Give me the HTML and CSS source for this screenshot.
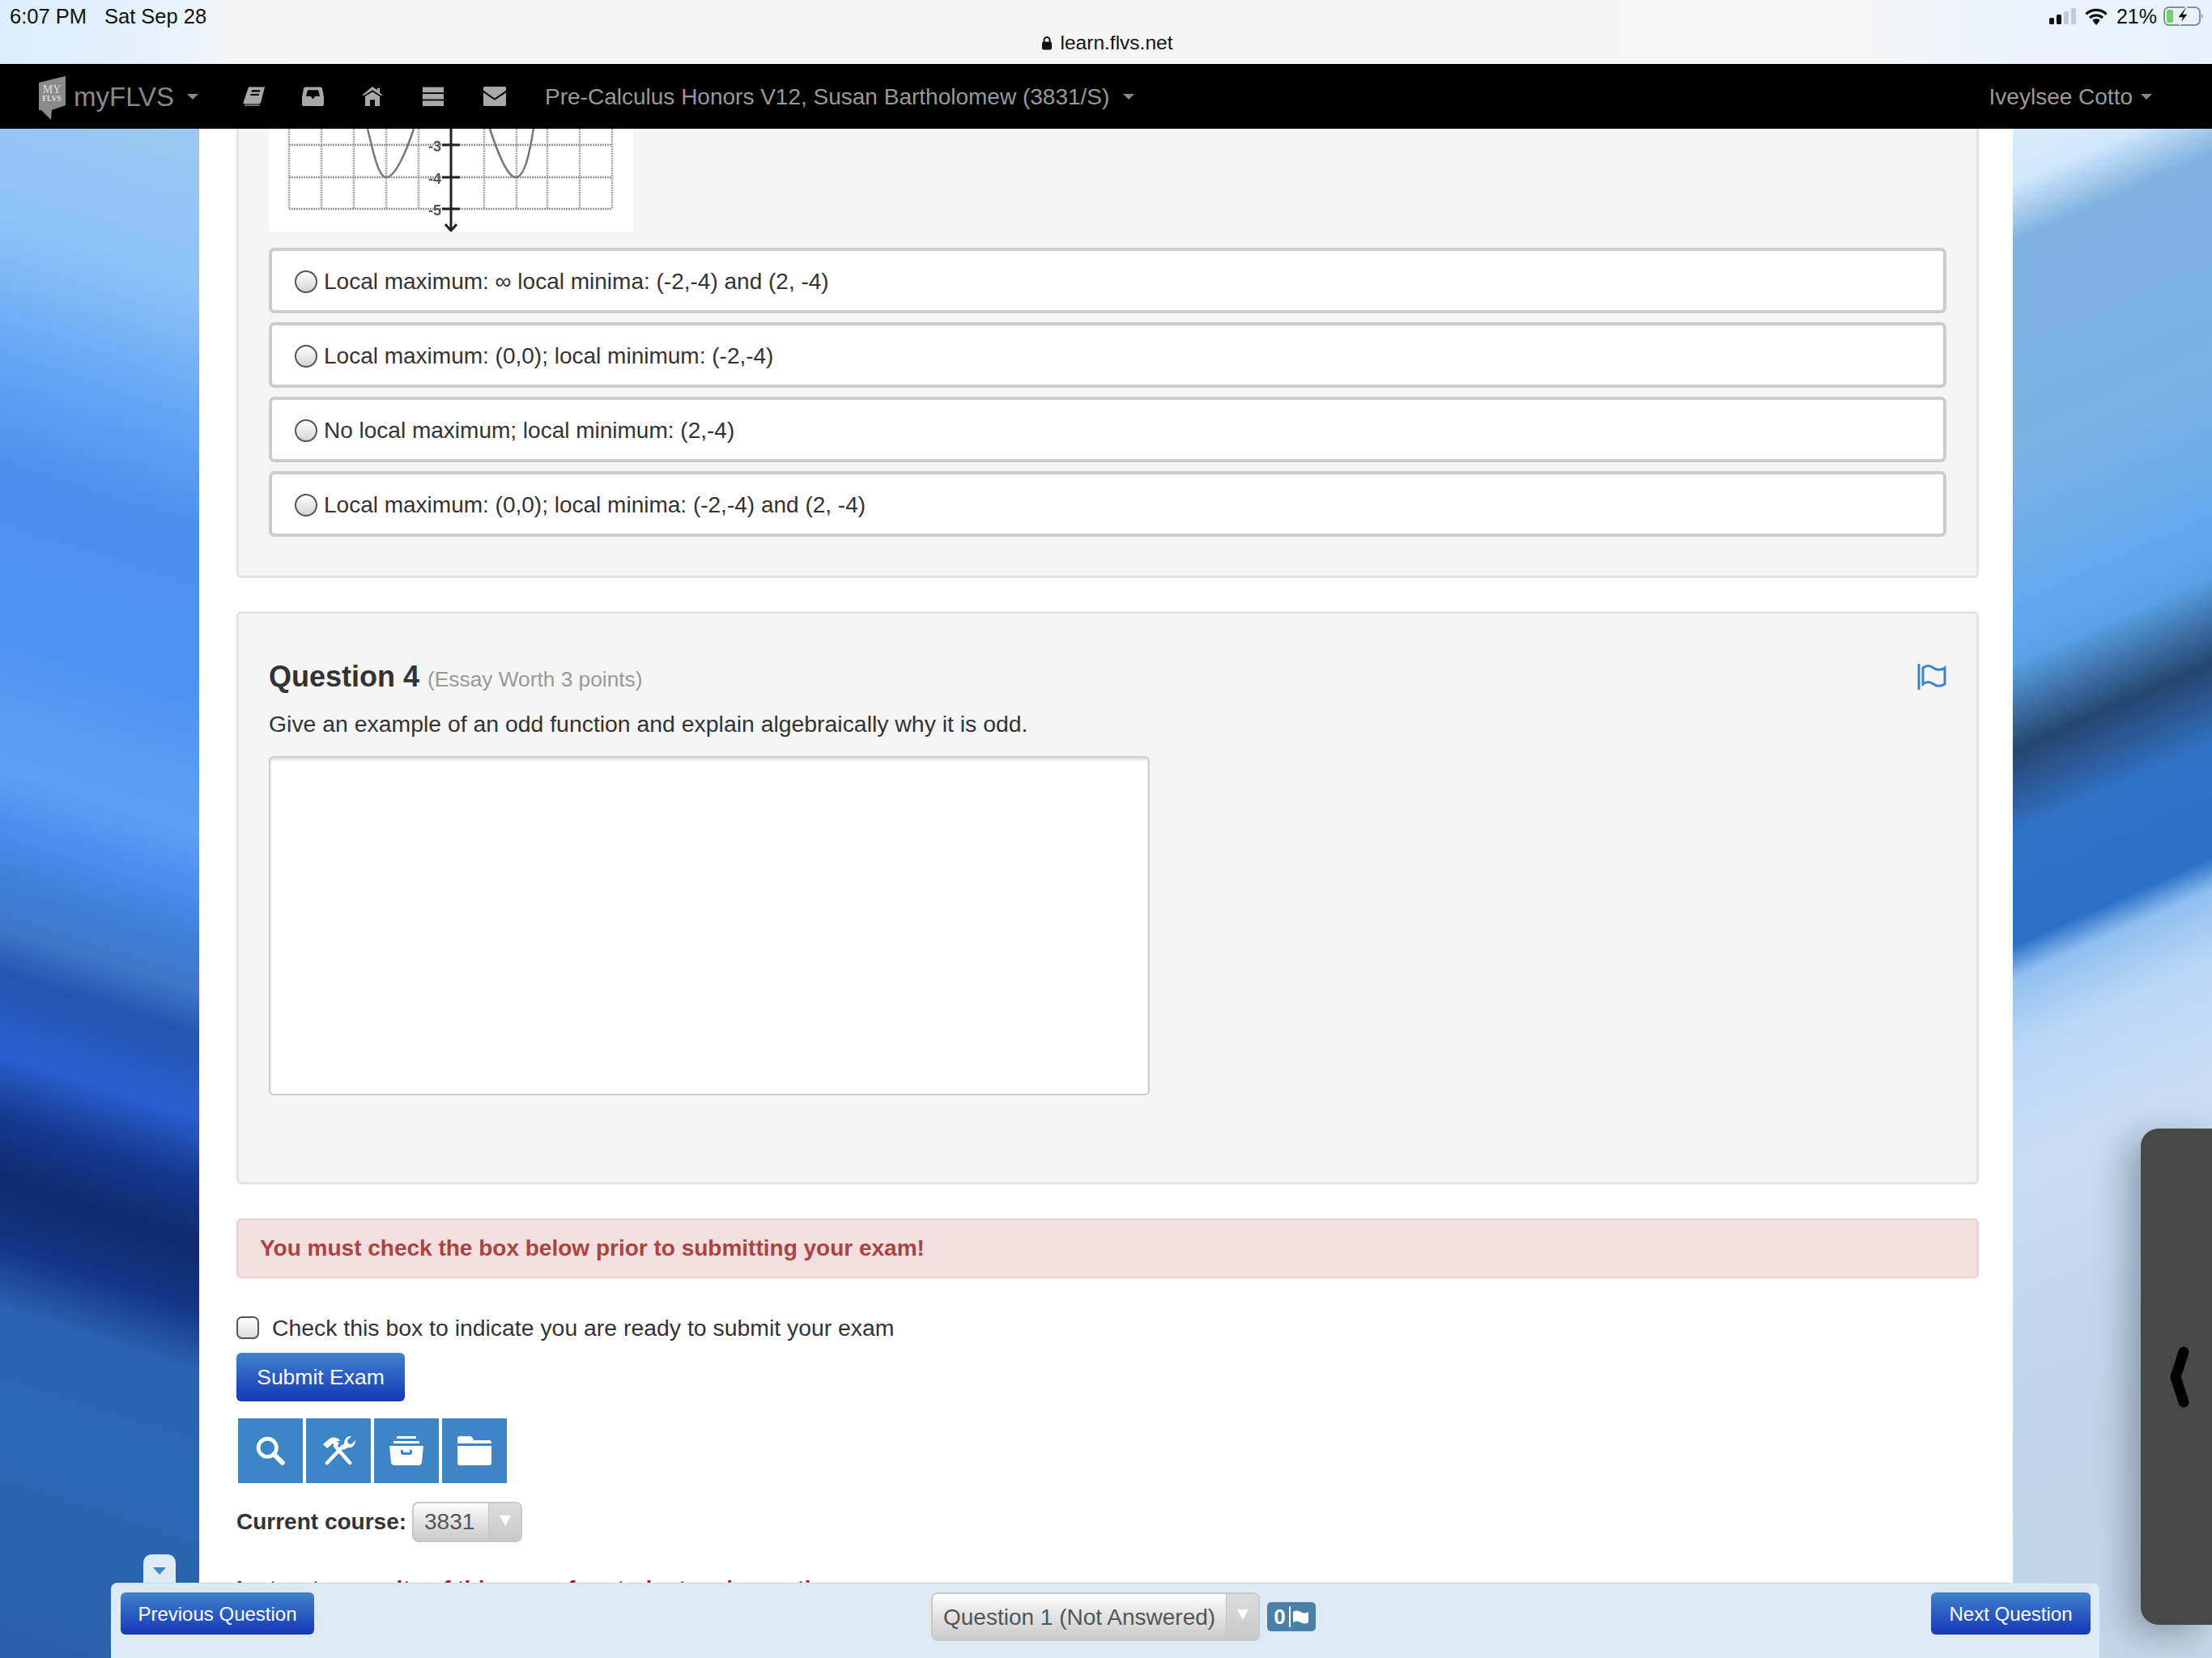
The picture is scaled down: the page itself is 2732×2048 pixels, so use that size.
FILE: index.html
```html
<!DOCTYPE html>
<html lang="en">
<head>
<meta charset="utf-8">
<title>myFLVS Exam</title>
<link rel="stylesheet" href="styles.css">
</head>
<body>
<div class="page">
  <header class="statusbar">
    <div class="status-left"><span>6:07 PM</span><span>Sat Sep 28</span></div>
    <div class="status-url">
      <svg class="lock" viewBox="0 0 14 18"><path d="M3.500 8V5.500a3.500 3.500 0 0 1 7 0V8" fill="none" stroke="#111" stroke-width="2"/><rect x="1" y="7.500" width="12" height="10" rx="2" fill="#111"/></svg>
      <span>learn.flvs.net</span>
    </div>
    <div class="status-right">
      <svg class="signal" viewBox="0 0 33 20"><rect x="0" y="12" width="6" height="8" rx="1.500" fill="#111"/><rect x="9" y="8" width="6" height="12" rx="1.500" fill="#111"/><rect x="18" y="4" width="6" height="16" rx="1.500" fill="#c4c8d0"/><rect x="27" y="0" width="6" height="20" rx="1.500" fill="#c4c8d0"/></svg>
      <svg class="wifi" viewBox="0 0 28 21"><path d="M1.500 7.500a18 18 0 0 1 25 0M6 12a12 12 0 0 1 16 0M10.200 16a6 6 0 0 1 7.600 0" fill="none" stroke="#111" stroke-width="3.200"/><path d="M14 21l-3.500-4a5 5 0 0 1 7 0z" fill="#111"/></svg>
      <span>21%</span>
      <svg class="battery" viewBox="0 0 50 24"><rect x="1" y="1" width="44" height="22" rx="6" fill="none" stroke="#8b8f94" stroke-width="2"/><rect x="4" y="4" width="8" height="16" rx="2.500" fill="#6fd36b"/><path d="M47 9c2 1 2 5 0 6z" fill="#8b8f94"/><path d="M27 1l-10 13h6l-3 9 11-14h-6l4-8z" fill="#111" stroke="#f3f5f9" stroke-width="1.500"/></svg>
    </div>
  </header>

  <nav class="navbar">
    <svg class="logo" viewBox="0 0 34 54">
      <path d="M0 8L33 0v36L16 42l-1 12L3 42H0z" fill="#8b8b8b"/>
      <text x="16" y="21" class="logo-my">MY</text>
      <text x="16" y="31" class="logo-flvs">FLVS</text>
    </svg>
    <span class="brand">myFLVS</span>
    <span class="caret brand-caret"></span>
    <svg class="nav-icon book" viewBox="0 0 28 40" preserveAspectRatio="none"><path d="M7 1h20l-5 32c-.4 2-1.500 3-3.500 3H3.500C1.500 36 0 34.500.5 32.500zM11 7l-.7 4h10.500l.7-4zM9.800 15l-.6 3.500h10.500l.6-3.500z" fill="#a8a8a8" fill-rule="evenodd"/><path d="M2 38.500h19" stroke="#a8a8a8" stroke-width="2"/></svg>
    <svg class="nav-icon inbox" viewBox="0 0 27 40" preserveAspectRatio="none"><path d="M5 1h17c1.500 0 2.500 1 3 2.500L27 22v15c0 1.500-1 3-3 3H3c-2 0-3-1.500-3-3V22L2 3.500C2.500 2 3.500 1 5 1zm2 6L5 20h6l2 5h1l2-5h6L20 7z" fill="#a8a8a8" fill-rule="evenodd"/></svg>
    <svg class="nav-icon home" viewBox="0 0 26 40" preserveAspectRatio="none"><path d="M13 0l6 7V3h3v9l4 6h-3L13 7 3 18H0z" fill="#a8a8a8"/><path d="M13 11l9 9v20h-6V27h-6v13H4V20z" fill="#a8a8a8"/></svg>
    <svg class="nav-icon bars" viewBox="0 0 26 40" preserveAspectRatio="none"><rect y="1" width="26" height="11" fill="#a8a8a8"/><rect y="15" width="26" height="11" fill="#a8a8a8"/><rect y="29" width="26" height="11" fill="#a8a8a8"/></svg>
    <svg class="nav-icon envelope" viewBox="0 0 28 40" preserveAspectRatio="none"><path d="M2 0h24a2 2 0 0 1 2 2v6L14 24 0 8V2a2 2 0 0 1 2-2zM0 12l14 16 14-16v26a2 2 0 0 1-2 2H2a2 2 0 0 1-2-2z" fill="#a8a8a8"/></svg>
    <span class="course-title">Pre-Calculus Honors V12, Susan Bartholomew (3831/S)</span>
    <span class="caret title-caret"></span>
    <span class="user-name">Iveylsee Cotto</span>
    <span class="caret user-caret"></span>
  </nav>

  <div class="viewport">
    <aside class="wall wall-left"></aside>
    <main class="content">
      <section class="panel panel-first">
        <svg class="graph" viewBox="0 0 450 127">
          <g class="graph-soft">
            <path class="grid-v" d="M25 0V99M65 0V99M105 0V99M145 0V99M185 0V99M266 0V99M306 0V99M344 0V99M384 0V99M424 0V99"/>
            <path class="grid-h" d="M25 20H424M25 60H424M25 99H424"/>
            <path class="curve" d="M122 0C130 34 136 60 145 60C156 60 170 28 179 0M273 0C284 34 296 60 305 60C316 60 322 30 327 0"/>
            <path class="axis" d="M225 0V124M214 20H236M214 60H236M214 99H236M218 118L225 126L232 118"/>
            <text x="197" y="28" class="tick">-3</text>
            <text x="197" y="68" class="tick">-4</text>
            <text x="197" y="107" class="tick">-5</text>
          </g>
        </svg>
        <div class="options">
          <label class="option"><input type="radio" name="q3" class="radio"><span>Local maximum: ∞ local minima: (-2,-4) and (2, -4)</span></label>
          <label class="option"><input type="radio" name="q3" class="radio"><span>Local maximum: (0,0); local minimum: (-2,-4)</span></label>
          <label class="option"><input type="radio" name="q3" class="radio"><span>No local maximum; local minimum: (2,-4)</span></label>
          <label class="option"><input type="radio" name="q3" class="radio"><span>Local maximum: (0,0); local minima: (-2,-4) and (2, -4)</span></label>
        </div>
      </section>

      <section class="panel panel-essay">
        <div class="question-head">
          <h2 class="question-title">Question 4 <small>(Essay Worth 3 points)</small></h2>
          <svg class="flag" viewBox="0 0 36 32"><path d="M2 1v30" stroke="#3d85c6" stroke-width="3" stroke-linecap="round" fill="none"/><path d="M7 5c4-3 9-3 13 0s9 3 14 0v20c-5 3-10 3-14 0s-9-3-13 0z" fill="none" stroke="#3d85c6" stroke-width="3"/></svg>
        </div>
        <p class="question-text">Give an example of an odd function and explain algebraically why it is odd.</p>
        <textarea class="answer" aria-label="Answer"></textarea>
      </section>

      <div class="alert">You must check the box below prior to submitting your exam!</div>

      <label class="confirm"><input type="checkbox" class="check"><span>Check this box to indicate you are ready to submit your exam</span></label>
      <button class="btn btn-submit" type="button">Submit Exam</button>

      <div class="tools">
        <span class="tool"><svg viewBox="0 0 34 34"><circle cx="13.500" cy="13.500" r="10.500" fill="none" stroke="#fff" stroke-width="4.500"/><path d="M21 21l10 10" stroke="#fff" stroke-width="5.500" stroke-linecap="round"/></svg></span>
        <span class="tool"><svg viewBox="0 0 42 36"><path d="M2 10L10 3Q15 0 21 3L23 6H19L22 9L18.500 13L14 9L7 15z" fill="#fff"/><path d="M17 12L35 33" stroke="#fff" stroke-width="4.500" stroke-linecap="round"/><path d="M7 33L26 13" stroke="#fff" stroke-width="4.500" stroke-linecap="round"/><path d="M37 0l-5 5 1 4 4 1 5-5c0 6-4 10-9 9l-6 3-1-4 2-4c0-5 4-10 9-9z" fill="#fff"/></svg></span>
        <span class="tool"><svg viewBox="0 0 42 36"><rect x="9" y="0" width="24" height="3" fill="#fff"/><rect x="5" y="6" width="32" height="3" fill="#fff"/><path d="M0 12h42l-2 20c0 2-2 4-4 4H6c-2 0-4-2-4-4zM14 17v3c0 2 1 3 3 3h8c2 0 3-1 3-3v-3h-3v3h-8v-3z" fill="#fff" fill-rule="evenodd"/></svg></span>
        <span class="tool"><svg viewBox="0 0 42 36"><path d="M0 3c0-2 1-3 3-3h12c2 0 3 1 4 3l1 2h19c2 0 3 1 3 3v1H0zM0 12h42v21c0 2-1 3-3 3H3c-2 0-3-1-3-3z" fill="#fff"/></svg></span>
      </div>

      <div class="course-row">
        <strong>Current course:</strong>
        <div class="select select-course"><span class="select-value">3831</span><span class="select-arrow"><i></i></span></div>
      </div>

      <p class="clipped">Instructor results of this exam for student review notice</p>
    </main>
    <aside class="wall wall-right"></aside>

    <div class="handle">
      <svg viewBox="0 0 30 80"><path d="M21 9L11 40l10 31" fill="none" stroke="#000" stroke-width="13" stroke-linecap="round" stroke-linejoin="round"/></svg>
    </div>

    <div class="tab"><i></i></div>
    <footer class="qbar">
      <button class="btn btn-prev" type="button">Previous Question</button>
      <div class="qbar-center">
        <div class="select select-question"><span class="select-value">Question 1 (Not Answered)</span><span class="select-arrow"><i></i></span></div>
        <span class="badge">0<svg viewBox="0 0 26 26"><path d="M2 1v24" stroke="#fff" stroke-width="2" stroke-linecap="round"/><path d="M6 7c3-2 6-2 9.500 0s6.500 2 9.500 0v13c-3 2-6 2-9.500 0s-6.500-2-9.500 0z" fill="#fff"/></svg></span>
      </div>
      <button class="btn btn-next" type="button">Next Question</button>
    </footer>
  </div>
</div>
</body>
</html>
```
FILE: styles.css
```css
* { box-sizing: border-box; }
html, body { margin: 0; padding: 0; }
body { font-family: "Liberation Sans", Arial, sans-serif; color: #333; background: #fff; }
.page { width: 2732px; height: 2048px; display: flex; flex-direction: column; overflow: hidden; }

/* iOS status bar */
.statusbar { height: 79px; flex: none; display: grid; grid-template-columns: 1fr auto 1fr; align-items: start; padding: 0 10px 0 12px; color: #111; font-size: 25px;
  background: linear-gradient(90deg, #dbeefd 0, #e6f2fc 200px, #f5f5f6 280px, #f6f6f7 2300px, #ecf2fb 2500px, #e8f1fb 100%); }
.status-left { display: flex; gap: 22px; padding-top: 5px; line-height: 30px; font-size: 25.500px; }
.status-url { display: flex; align-items: center; gap: 10px; padding-top: 38px; line-height: 30px; font-size: 24.500px; }
.lock { width: 14px; height: 18px; }
.status-right { display: flex; align-items: center; justify-content: flex-end; padding-top: 5px; line-height: 30px; }
.signal { width: 33px; height: 20px; }
.wifi { width: 28px; height: 21px; margin-left: 11px; }
.status-right span { margin-left: 11px; }
.battery { width: 50px; height: 24px; margin-left: 8px; }

/* Navbar */
.navbar { height: 80px; flex: none; background: #000; display: flex; align-items: center; color: #999; font-size: 28px; padding-left: 48px; position: relative; z-index: 3; }
.logo { width: 34px; height: 54px; flex: none; margin-top: 3px; }
.logo-my { font-family: "Liberation Serif", serif; font-size: 14px; fill: #ddd; text-anchor: middle; }
.logo-flvs { font-family: "Liberation Serif", serif; font-size: 9.500px; font-weight: bold; fill: #ddd; text-anchor: middle; }
.brand { font-size: 33px; margin-left: 9px; color: #888; padding-top: 1px; }
.caret { width: 0; height: 0; border-left: 7.500px solid transparent; border-right: 7.500px solid transparent; border-top: 7.500px solid #888; flex: none; }
.brand-caret { margin-left: 16px; }
.nav-icon { height: 24px; flex: none; }
.book { width: 28px; margin-left: 55px; }
.inbox { width: 27px; margin-left: 45px; }
.home { width: 26px; margin-left: 47px; }
.bars { width: 26px; margin-left: 49px; }
.envelope { width: 28px; margin-left: 49px; }
.course-title { margin-left: 48px; padding-top: 1px; }
.title-caret { margin-left: 17px; }
.user-name { margin-left: auto; padding-top: 1px; }
.user-caret { margin-left: 10px; margin-right: 74px; }

/* Main area */
.viewport { flex: 1; display: flex; position: relative; min-height: 0; }
.wall { width: 246px; flex: none; }
.wall-left { background: linear-gradient(198deg, #9cc9f2 0, #8cc2f7 10%, #6aaaf5 17%, #4a90ef 25%, #4a92f3 35%, #5da0f5 44%, #4a8cf0 48%, #3f7fd8 51%, #3f78c8 54%, #2455b0 57%, #2a5fd0 62%, #15398f 66%, #0f2a6e 70%, #133585 74%, #2a62b0 78%, #2a68b4 85%, #2a5fa8 100%); }
.wall-right { background: linear-gradient(156deg, #d8ebfa 0, #d0e6fa 3.500%, #7fb3e0 7%, #7cb2e4 20%, #62a8ee 30%, #5aa2e8 33%, #24466e 38.500%, #2c5a98 41%, #2f72c4 43.500%, #2a6fc8 50.500%, #8fbff0 52.500%, #bcd8f6 57%, #c8dcf2 64%, #bfd3e8 83%, #c5d8ea 100%); }
.content { width: 2240px; flex: none; background: #fff; padding: 0 42px 0 46px; min-width: 0; }

.panel { background: #f5f5f5; border: 3px solid #e3e3e3; border-radius: 6px; padding: 0 37px; }
.panel-first { border-top: 0; border-top-left-radius: 0; border-top-right-radius: 0; height: 555px; }
.graph { display: block; width: 450px; height: 127px; background: #fff; }
.graph-soft { filter: blur(.5px); }
.grid-v { stroke: #aaa; stroke-width: 2.500; stroke-dasharray: 2 1; fill: none; }
.grid-h { stroke: #999; stroke-width: 2.500; stroke-dasharray: 2 1; fill: none; }
.curve { fill: none; stroke: #777; stroke-width: 2.500; }
.axis { fill: none; stroke: #222; stroke-width: 3; }
.tick { font-size: 18px; fill: #555; font-weight: bold; }
.options { margin-top: 20px; display: flex; flex-direction: column; gap: 11px; }
.option { height: 81px; background: #fff; border: 4px solid #ccc; border-radius: 7px; display: flex; align-items: center; padding: 2px 0 0 28px; font-size: 28px; color: #333; }
.radio { appearance: none; -webkit-appearance: none; width: 28px; height: 28px; margin: 0 8px 0 0; border-radius: 50%; border: 2px solid #555; background: linear-gradient(#fff, #d4d4d4); flex: none; }

.panel-essay { margin-top: 41px; height: 708px; padding-top: 54px; }
.question-head { display: flex; justify-content: space-between; align-items: flex-start; }
.question-title { margin: 0; font-size: 36px; line-height: 48px; font-weight: bold; color: #333; }
.question-title small { font-size: 26.300px; font-weight: normal; color: #999; }
.flag { width: 36px; height: 32px; margin-top: 8px; }
.question-text { margin: 11px 0 0; font-size: 28.400px; line-height: 40px; color: #333; }
.answer { display: block; width: 1088px; height: 419px; margin-top: 20px; border: 2px solid #ccc; border-radius: 6px; background: #fff; box-shadow: inset 0 3px 3px rgba(0,0,0,.12); resize: none; padding: 0; outline: 0; }

.alert { margin-top: 42px; height: 74px; background: #f2dede; border: 2px solid #ebccd1; border-radius: 6px; display: flex; align-items: center; padding-left: 27px; font-size: 28px; font-weight: bold; color: #a94442; }

.confirm { display: flex; align-items: center; margin-top: 45px; font-size: 28.400px; line-height: 32px; color: #333; }
.check { appearance: none; -webkit-appearance: none; width: 28px; height: 28px; margin: 0 16px 0 0; border: 2px solid #555; border-radius: 7px; background: linear-gradient(#fff, #dcdcdc); flex: none; }

.btn { border: 0; color: #fff; font-family: inherit; font-size: 24px; background: linear-gradient(#3f85cc, #3a78c8 15%, #1a3fbc 90%); border-radius: 6px; border-bottom: 1px solid #16348f; padding: 2px 0 0; display: block; }
.btn-submit { width: 208px; height: 60px; margin-top: 15px; font-size: 26.500px; }

.tools { display: flex; gap: 4px; margin-top: 21px; padding-left: 2px; }
.tool { width: 80px; height: 80px; background: #3d85c6; display: flex; align-items: center; justify-content: center; }
.tool svg { width: 42px; height: 36px; }

.course-row { display: flex; align-items: center; gap: 7px; margin-top: 23px; font-size: 28px; color: #333; }
.select { display: flex; align-items: stretch; background: linear-gradient(#fff, #f2f2f2 20%, #c9c9c9); border: 2px solid #c8c8c8; border-radius: 8px; color: #555; white-space: nowrap; }
.select-value { display: flex; align-items: center; flex: 1; }
.select-arrow { display: flex; justify-content: center; padding-top: 15px; border-left: 1px solid #c4c4c4; background: linear-gradient(#dcdcdc, #c9c9c9); border-radius: 0 7px 7px 0; }
.select-arrow i { width: 0; height: 0; border-left: 7px solid transparent; border-right: 7px solid transparent; border-top: 13px solid #fff; }
.select-course { width: 136px; height: 50px; font-size: 28px; }
.select-course .select-value { padding-left: 13px; }
.select-course .select-arrow { width: 40px; }
.select-question { width: 406px; height: 60px; font-size: 28px; }
.select-question .select-value { padding: 2px 0 0 13px; }
.select-question .select-arrow { width: 40px; padding-top: 19px; }
.clipped { margin: 42px 0 0; font-size: 28px; font-weight: bold; color: #a01f2b; line-height: 32px; white-space: nowrap; }

/* overlays */
.handle { position: absolute; left: 2644px; top: 1235px; width: 88px; height: 613px; background: #484848; border-radius: 22px 0 0 22px; box-shadow: -16px 12px 40px rgba(40,50,60,.35); }
.handle svg { position: absolute; left: 32px; top: 267px; width: 30px; height: 80px; }
.tab { position: absolute; left: 177px; top: 1761px; width: 40px; height: 40px; background: #dceaf6; border-radius: 10px 10px 0 0; display: flex; justify-content: center; padding-top: 16px; }
.tab i { width: 0; height: 0; border-left: 8.500px solid transparent; border-right: 8.500px solid transparent; border-top: 9px solid #3d85c6; }
.qbar { position: absolute; left: 137px; right: 139px; top: 1796px; height: 93px; background: #dceaf6; border-top: 1px solid #c6e0e6; border-radius: 8px 8px 0 0; display: flex; justify-content: space-between; align-items: flex-start; padding: 11px 11px 0 12px; }
.btn-prev { width: 239px; height: 52px; }
.btn-next { width: 197px; height: 52px; }
.qbar-center { display: flex; align-items: center; gap: 9px; position: absolute; left: 1013px; top: 11px; }
.badge { width: 60px; height: 36px; background: #4a7fa8; border-radius: 5px; color: #fff; font-size: 26px; font-weight: bold; display: flex; align-items: center; justify-content: center; gap: 3px; }
.badge svg { width: 26px; height: 26px; }
```
